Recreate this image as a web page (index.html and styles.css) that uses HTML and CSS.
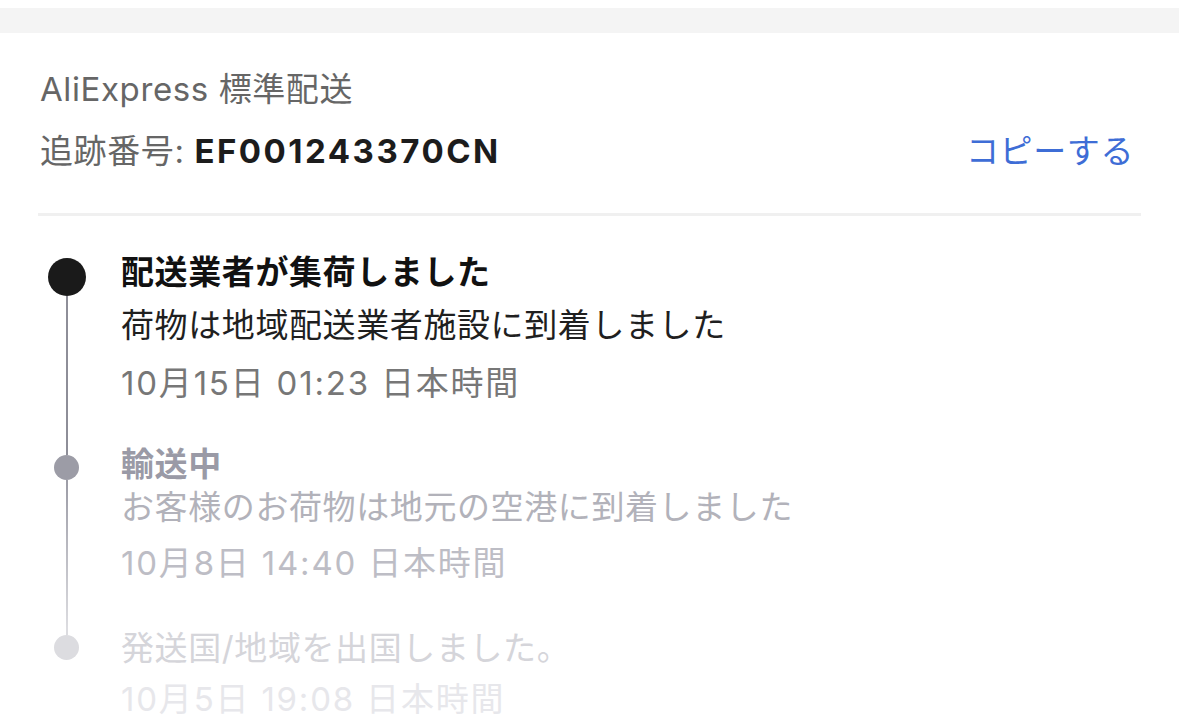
FILE: index.html
```html
<!DOCTYPE html>
<html>
<head>
  <title>配送状況</title>
  <link rel="stylesheet" href="styles.css">
</head>
<body>
  <div class="band"></div>
  <div class="card">
    <div class="carrier">AliExpress 標準配送</div>
    <div class="track-row">
      <span class="track">追跡番号: <b class="track-no">EF001243370CN</b></span>
      <span class="copy">コピーする</span>
    </div>
    <div class="divider"></div>

    <div class="timeline">
      <div class="step step-current">
        <div class="marker">
          <span class="seg seg-before"></span>
          <span class="dot"></span>
          <span class="seg seg-after"></span>
        </div>
        <div class="info">
          <div class="title">配送業者が集荷しました</div>
          <div class="desc">荷物は地域配送業者施設に到着しました</div>
          <div class="time">10月15日 01:23 日本時間</div>
        </div>
      </div>

      <div class="step step-past">
        <div class="marker">
          <span class="seg seg-before"></span>
          <span class="dot"></span>
          <span class="seg seg-after"></span>
        </div>
        <div class="info">
          <div class="title">輸送中</div>
          <div class="desc">お客様のお荷物は地元の空港に到着しました</div>
          <div class="time">10月8日 14:40 日本時間</div>
        </div>
      </div>

      <div class="step step-old">
        <div class="marker">
          <span class="seg seg-before"></span>
          <span class="dot"></span>
        </div>
        <div class="info">
          <div class="desc">発送国/地域を出国しました。</div>
          <div class="time">10月5日 19:08 日本時間</div>
        </div>
      </div>
    </div>
  </div>
</body>
</html>
```

FILE: styles.css
```css
body {
  margin: 0;
  background: #ffffff;
  font-family: "Inter", "Noto Sans CJK JP", sans-serif;
  font-size: 33px;
  line-height: 40px;
  letter-spacing: 0.6px;
  overflow: hidden;
}

.band {
  margin-top: 8px;
  height: 25px;
  background: #f4f4f4;
}

.card {
  padding: 36px 38px 0 38px;
}

.carrier {
  color: #666666;
  padding-left: 2px;
}

.track-row {
  display: flex;
  justify-content: space-between;
  margin-top: 22px;
  padding: 0 7px 0 2px;
}

.track {
  color: #666666;
}

.track-no {
  color: #1c1c1c;
  font-weight: 700;
  letter-spacing: 2.5px;
}

.copy {
  color: #3e6dd6;
}

.divider {
  margin-top: 42px;
  height: 3px;
  background: #f0f0f0;
}

/* timeline */
.timeline {
  margin-top: 36px;
}

.step {
  display: grid;
  grid-template-columns: 57px 1fr;
  column-gap: 26px;
}

.marker {
  display: flex;
  flex-direction: column;
  align-items: center;
}

.seg {
  width: 2px;
}

.seg-after {
  flex: 1;
}

.dot {
  border-radius: 50%;
  flex: none;
}

.time {
  letter-spacing: 1.8px;
}

.step-current .info { padding-bottom: 41px; }
.step-current .seg-before { height: 6px; }
.step-current .dot { width: 38px; height: 38px; background: #1a1a1a; }
.step-current .seg-after { background: #8e8e98; }
.step-current .title { color: #111111; font-weight: 700; }
.step-current .desc { color: #1f1f1f; margin-top: 13px; }
.step-current .time { color: #777777; margin-top: 18px; }

.step-past .info { padding-bottom: 45px; }
.step-past .seg-before { height: 11px; background: #8e8e98; }
.step-past .dot { width: 25px; height: 25px; background: #9c9ca6; }
.step-past .seg-after { background: linear-gradient(#9c9ca6, #dcdce0); }
.step-past .title { color: #9a9aa6; font-weight: 700; }
.step-past .desc { color: #b2b2ba; margin-top: 3px; }
.step-past .time { color: #bdbdc5; margin-top: 16px; }

.step-old .seg-before { height: 7px; background: #dcdce0; }
.step-old .dot { width: 25px; height: 25px; background: #dcdce0; }
.step-old .desc { color: #d5d5da; }
.step-old .time { color: #e7e7eb; margin-top: 11px; }
```
